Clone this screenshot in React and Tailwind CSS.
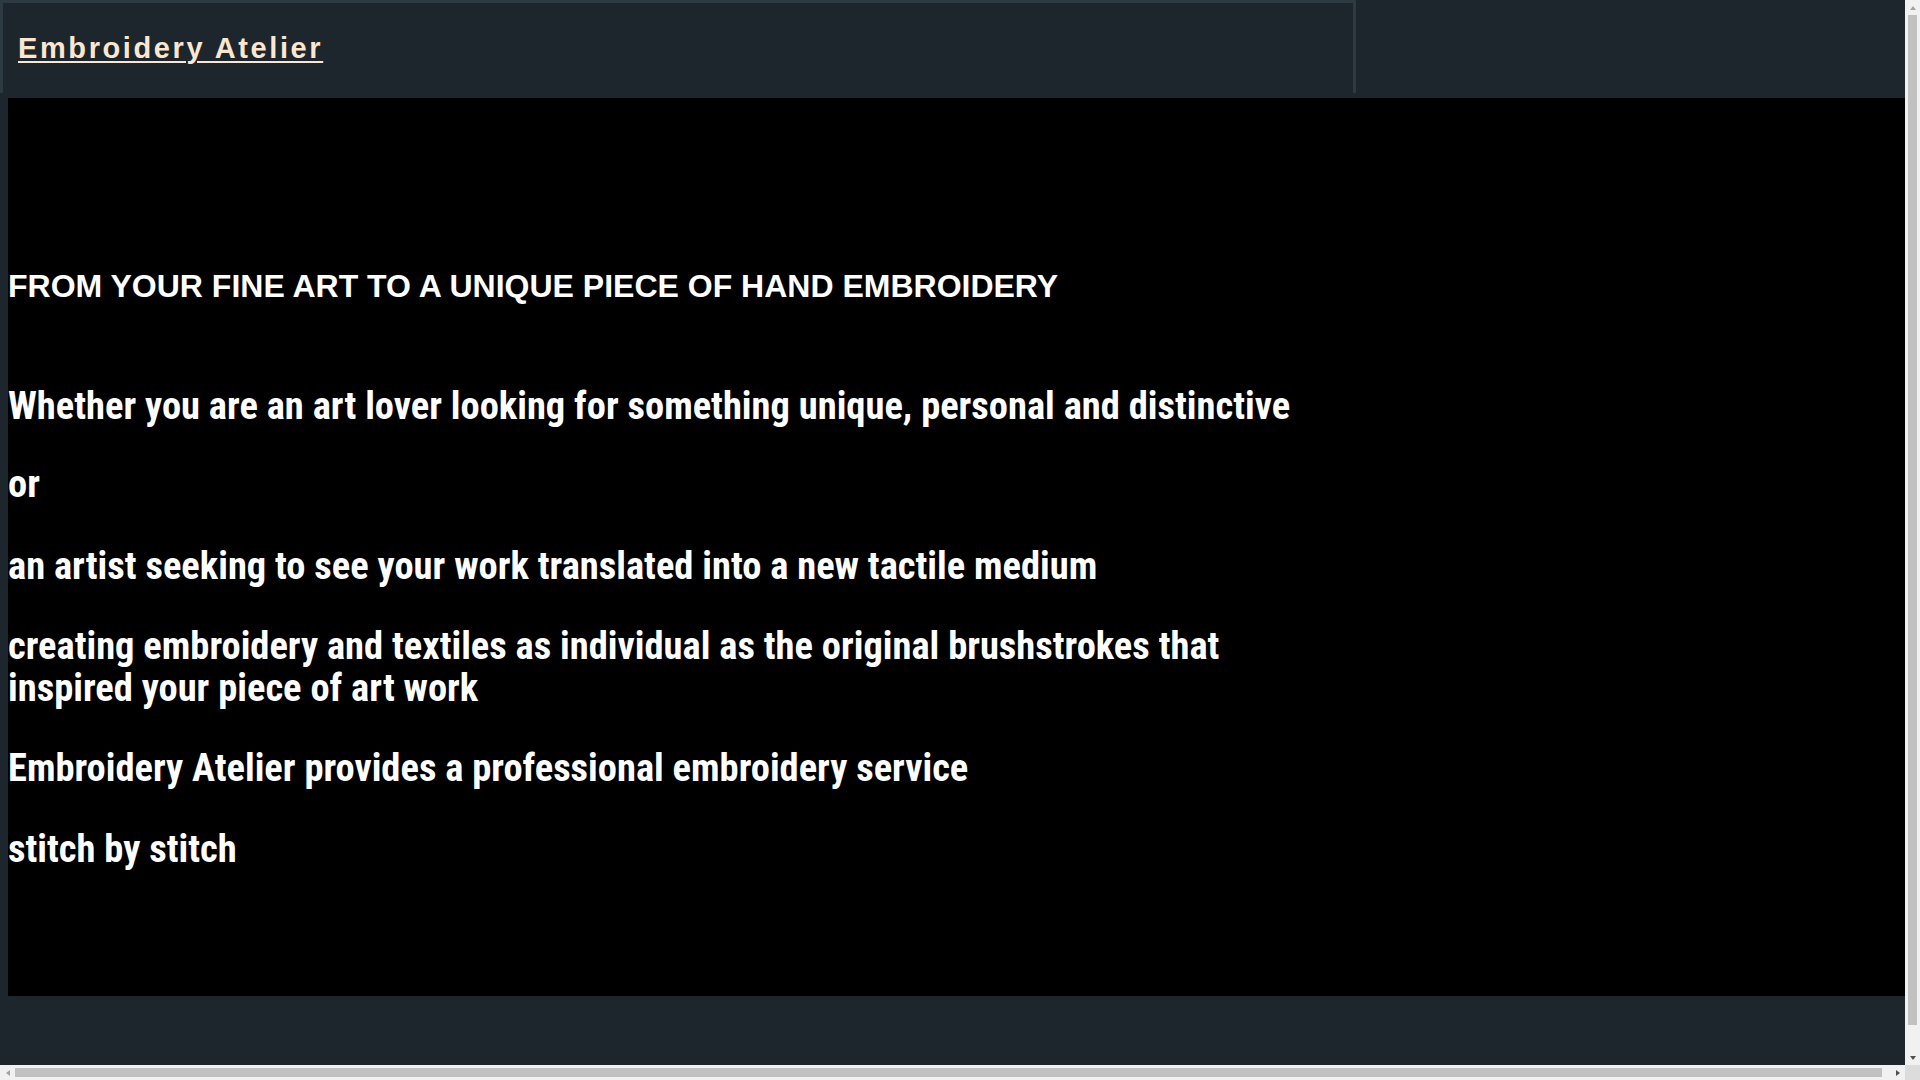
function Arrow({ dir, color }) {
  const points = {
    up: '1,6 4,2 7,6',
    down: '1,2 4,6 7,2',
    left: '6,1 2,4 6,7',
    right: '2,1 6,4 2,7',
  }[dir];
  return (
    <svg width="8" height="8" viewBox="0 0 8 8">
      <polygon points={points} fill={color} />
    </svg>
  );
}

export default function App() {
  const lines = [
    { text: 'Whether you are an art lover looking for something unique, personal and distinctive', mt: 'mt-[79px]' },
    { text: 'or', mt: 'mt-[36px]' },
    { text: 'an artist seeking to see your work translated into a new tactile medium', mt: 'mt-[40px]' },
    { text: 'creating embroidery and textiles as individual as the original brushstrokes that inspired your piece of art work', mt: 'mt-[38px]' },
    { text: 'Embroidery Atelier provides a professional embroidery service', mt: 'mt-[38px]' },
    { text: 'stitch by stitch', mt: 'mt-[39px]' },
  ];

  return (
    <div className="w-[1913px] min-h-[1130px] bg-[#1c262c] pb-[130px]">
      {/* Header */}
      <header className="w-[1356px] h-[93px] border-t-[3px] border-l-[3px] border-r-[3px] border-[#2e3a42] pl-[15px] pt-[29px]">
        <a
          href="#"
          className="block w-fit text-[29px] leading-[33px] font-bold tracking-[2.6px] text-[#fbe6d2] underline underline-offset-[3px] decoration-2"
          style={{ fontFamily: '"Liberation Sans", Arial, sans-serif' }}
        >
          Embroidery Atelier
        </a>
      </header>

      {/* Hero */}
      <main className="mt-[5px] ml-[8px] w-[1905px] bg-black text-white pt-[168px] pb-[126px]">
        <h2
          className="text-[32px] leading-[40px] font-bold"
          style={{ fontFamily: '"Liberation Sans", Arial, sans-serif' }}
        >
          FROM YOUR FINE ART TO A UNIQUE PIECE OF HAND EMBROIDERY
        </h2>
        <div
          className="w-[1300px]"
          style={{ fontFamily: '"Roboto Condensed", Roboto, "Liberation Sans", sans-serif' }}
        >
          {lines.map((l) => (
            <p key={l.text} className={`${l.mt} text-[38.5px] leading-[42px] font-bold`}>
              {l.text}
            </p>
          ))}
        </div>
      </main>

      {/* Browser scrollbars */}
      <div className="fixed top-0 right-0 w-[15px] h-[1065px] bg-[#f1f1f1] flex flex-col items-center">
        <div className="h-[15px] flex items-center justify-center">
          <Arrow dir="up" color="#a3a3a3" />
        </div>
        <div className="w-[9px] h-[1010px] bg-[#c1c1c1]" />
        <div className="mt-auto h-[15px] flex items-center justify-center">
          <Arrow dir="down" color="#505050" />
        </div>
      </div>
      <div className="fixed bottom-0 left-0 w-[1905px] h-[15px] bg-[#f1f1f1] flex items-center">
        <div className="w-[15px] flex items-center justify-center">
          <Arrow dir="left" color="#a3a3a3" />
        </div>
        <div className="w-[1867px] h-[9px] bg-[#c1c1c1]" />
        <div className="ml-auto w-[15px] flex items-center justify-center">
          <Arrow dir="right" color="#505050" />
        </div>
      </div>
      <div className="fixed bottom-0 right-0 w-[15px] h-[15px] bg-[#dcdcdc]" />
    </div>
  );
}
